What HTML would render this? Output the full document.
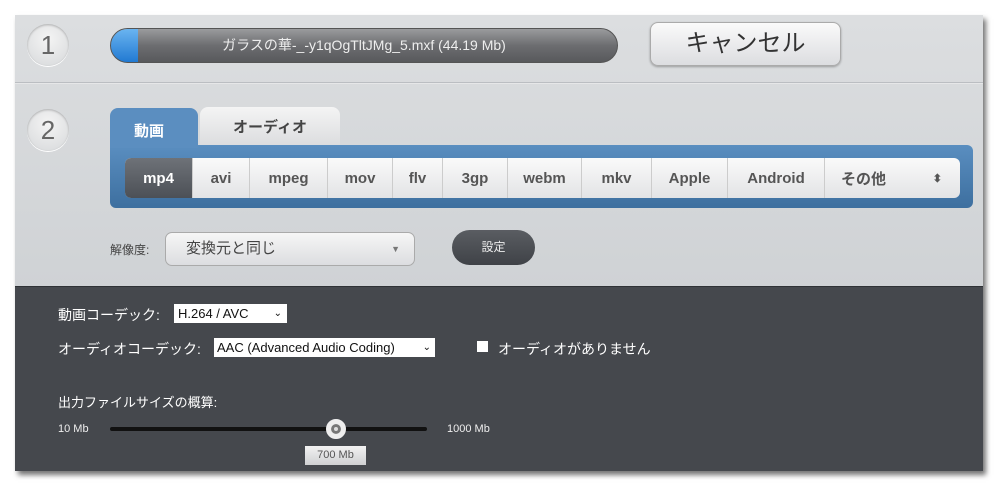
<!DOCTYPE html>
<html><head><meta charset="utf-8"><style>
*{box-sizing:border-box;margin:0;padding:0}
body{width:1000px;height:488px;background:#fff;font-family:"Liberation Sans","Noto Sans CJK JP",sans-serif;position:relative;overflow:hidden}
.abs{position:absolute}
#panel{left:15px;top:15px;width:968px;height:456px;background:linear-gradient(#dcdee0,#cfd2d5 60%,#c4c7cb);box-shadow:3px 4px 5px rgba(0,0,0,.55)}
.circ{width:42px;height:42px;border-radius:50%;background:radial-gradient(circle at 50% 35%,#f4f4f4,#d6d8da);box-shadow:inset 0 1px 2px rgba(0,0,0,.25),0 1px 0 #fff;color:#666;font-size:26px;text-align:center;line-height:42px}
.fmt{display:flex;align-items:center}
.fmt div{height:100%;display:flex;align-items:center;justify-content:center;border-right:1px solid #ccc;color:#555;font-weight:bold;font-size:15px}
</style></head><body>
<div id="panel" class="abs"></div>
<div class="abs circ" style="left:27px;top:24px">1</div>
<div class="abs" style="left:110px;top:28px;width:508px;height:35px;border-radius:18px;background:linear-gradient(#9a9b9d,#6c6d70 50%,#58595c);border:1px solid #555;overflow:hidden;color:#eee;font-size:14px;text-align:center;line-height:33px">
<div class="abs" style="left:0;top:0;width:27px;height:35px;background:linear-gradient(#6ab4f0,#1d76d0);clip-path:polygon(0 0,100% 0,100% 100%,0 100%)"></div>ガラスの華-_-y1qOgTltJMg_5.mxf (44.19 Mb)</div>
<div class="abs" style="left:650px;top:22px;width:191px;height:44px;border-radius:8px;background:linear-gradient(#fafafa,#dcdde0);border:1px solid #aaa;box-shadow:0 1px 2px rgba(0,0,0,.3);color:#333;font-size:24px;text-align:center;line-height:42px">キャンセル</div>
<div class="abs" style="left:15px;top:82px;width:968px;height:2px;background:#bbbec2;border-bottom:1px solid #e6e7e8"></div>
<div class="abs circ" style="left:27px;top:109px">2</div>
<div class="abs" style="left:110px;top:145px;width:863px;height:63px;border-radius:0 6px 6px 6px;background:linear-gradient(#5a8ec0,#3d6f9f)"></div>
<div class="abs" style="left:110px;top:108px;width:88px;height:40px;border-radius:8px 8px 0 0;background:#5b8ec0;color:#fff;font-weight:bold;font-size:15px;padding:12px 0 0 24px">動画</div>
<div class="abs" style="left:200px;top:107px;width:140px;height:38px;border-radius:8px 8px 0 0;background:linear-gradient(#f4f4f4,#dcdddf);color:#444;font-weight:bold;font-size:15px;text-align:center;line-height:42px">オーディオ</div>
<div class="abs fmt" style="left:125px;top:158px;width:835px;height:40px;border-radius:6px;background:linear-gradient(#fafafa,#e2e3e5);overflow:hidden">
<div style="width:68px;background:linear-gradient(#6e7278,#4c5056);color:#fff">mp4</div>
<div style="width:57px">avi</div><div style="width:78px">mpeg</div><div style="width:65px">mov</div><div style="width:50px">flv</div><div style="width:65px">3gp</div><div style="width:74px">webm</div><div style="width:70px">mkv</div><div style="width:76px">Apple</div><div style="width:97px">Android</div>
<div style="flex:1;border:none;justify-content:space-between;padding:0 18px 0 16px"><span>その他</span><span style="font-size:11px">⬍</span></div></div>
<div class="abs" style="left:110px;top:241px;font-size:12px;color:#444">解像度:</div>
<div class="abs" style="left:165px;top:232px;width:250px;height:34px;border-radius:7px;background:linear-gradient(#f6f6f6,#dcdde0);border:1px solid #aaa;color:#444;font-size:15px;line-height:32px;padding-left:20px">変換元と同じ<span style="position:absolute;right:14px;font-size:9px;color:#777">▼</span></div>
<div class="abs" style="left:452px;top:230px;width:83px;height:35px;border-radius:18px;background:linear-gradient(#5a5d62,#3f4247);color:#eee;font-size:12px;text-align:center;line-height:35px">設定</div>
<div class="abs" style="left:15px;top:286px;width:968px;height:185px;background:#45484d;border-top:1px solid #2f3236"></div>
<div class="abs" style="left:58px;top:305px;color:#fff;font-size:14px">動画コーデック:</div>
<div class="abs" style="left:174px;top:304px;width:113px;height:19px;background:#fff;font-size:13px;padding-left:4px;line-height:19px;color:#111">H.264 / AVC<span style="position:absolute;right:5px;font-size:10px">⌄</span></div>
<div class="abs" style="left:58px;top:339px;color:#fff;font-size:14px">オーディオコーデック:</div>
<div class="abs" style="left:214px;top:338px;width:221px;height:19px;background:#fff;font-size:13px;padding-left:3px;line-height:19px;color:#111">AAC (Advanced Audio Coding)<span style="position:absolute;right:4px;font-size:10px">⌄</span></div>
<div class="abs" style="left:477px;top:341px;width:11px;height:11px;background:#fff"></div>
<div class="abs" style="left:498px;top:339px;color:#fff;font-size:14px">オーディオがありません</div>
<div class="abs" style="left:58px;top:392px;color:#fff;font-size:13px">出力ファイルサイズの概算:</div>
<div class="abs" style="left:58px;top:423px;color:#eee;font-size:11px">10 Mb</div>
<div class="abs" style="left:110px;top:427px;width:317px;height:4px;background:#111;border-radius:2px"></div>
<div class="abs" style="left:326px;top:419px;width:20px;height:20px;border-radius:50%;background:#ddd;border:5px solid #eee;box-shadow:inset 0 0 0 3px #777"></div>
<div class="abs" style="left:447px;top:423px;color:#eee;font-size:11px">1000 Mb</div>
<div class="abs" style="left:305px;top:446px;width:61px;height:19px;background:linear-gradient(#f2f2f2,#cfd0d2);color:#555;font-size:11px;text-align:center;line-height:19px">700 Mb</div>
</body></html>
